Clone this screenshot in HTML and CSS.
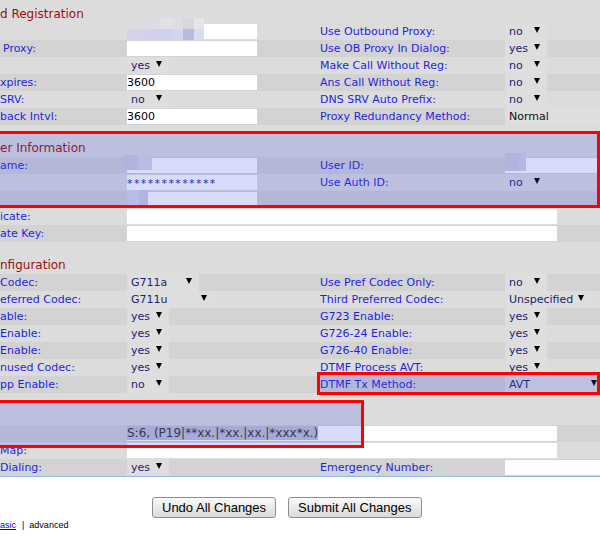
FILE: index.html
```html
<!DOCTYPE html>
<html>
<head>
<meta charset="utf-8">
<title>Line configuration</title>
<link rel="stylesheet" href="styles.css">
</head>
<body>
<div class="page">
  <div class="cfg">
    <div class="top-gap"></div>
    <div class="head">d Registration</div>

    <div class="row lt">
      <div class="lab"></div>
      <div class="val">
        <div class="inp"></div>
        <svg class="mos mos1" width="77" height="22" viewBox="0 0 77 22">
          <rect x="0" y="0" width="23" height="11" fill="#dcdce0"/>
          <rect x="23" y="0" width="11" height="11" fill="#dcdce2"/>
          <rect x="34" y="0" width="11" height="11" fill="#e2e2e6"/>
          <rect x="45" y="0" width="11" height="11" fill="#dedee2"/>
          <rect x="56" y="0" width="11" height="11" fill="#d8d8dc"/>
          <rect x="67" y="0" width="10" height="11" fill="#e6e6e8"/>
          <rect x="0" y="11" width="23" height="11" fill="#d2d2ec"/>
          <rect x="23" y="11" width="11" height="11" fill="#d0d0ea"/>
          <rect x="34" y="11" width="11" height="11" fill="#cdd3ee"/>
          <rect x="45" y="11" width="11" height="11" fill="#d5d5ef"/>
          <rect x="56" y="11" width="11" height="11" fill="#babade"/>
          <rect x="67" y="11" width="10" height="11" fill="#d6dcf4"/>
        </svg>
      </div>
      <div class="lab">Use Outbound Proxy:</div>
      <div class="val"><div class="sel">no<i class="tri"></i></div></div>
    </div>
    <div class="row dk">
      <div class="lab ind">Proxy:</div>
      <div class="val"><div class="inp"></div></div>
      <div class="lab">Use OB Proxy In Dialog:</div>
      <div class="val"><div class="sel">yes<i class="tri"></i></div></div>
    </div>
    <div class="row lt">
      <div class="lab"></div>
      <div class="val"><div class="sel">yes<i class="tri"></i></div></div>
      <div class="lab">Make Call Without Reg:</div>
      <div class="val"><div class="sel">no<i class="tri"></i></div></div>
    </div>
    <div class="row dk">
      <div class="lab">xpires:</div>
      <div class="val"><div class="inp">3600</div></div>
      <div class="lab">Ans Call Without Reg:</div>
      <div class="val"><div class="sel">no<i class="tri"></i></div></div>
    </div>
    <div class="row lt">
      <div class="lab">SRV:</div>
      <div class="val"><div class="sel">no<i class="tri"></i></div></div>
      <div class="lab">DNS SRV Auto Prefix:</div>
      <div class="val"><div class="sel">no<i class="tri"></i></div></div>
    </div>
    <div class="row dk">
      <div class="lab">back Intvl:</div>
      <div class="val"><div class="inp">3600</div></div>
      <div class="lab">Proxy Redundancy Method:</div>
      <div class="val"><div class="sel s-wide">Normal</div></div>
    </div>

    <div class="blank"></div>
    <div class="head">er Information</div>

    <div class="row dk">
      <div class="lab">ame:</div>
      <div class="val">
        <div class="inp"></div>
        <svg class="mos mos2" width="29" height="15" viewBox="0 0 29 15">
          <rect x="0" y="0" width="15" height="15" fill="#cdcdde"/>
          <rect x="15" y="0" width="14" height="15" fill="#d7d7e8"/>
        </svg>
      </div>
      <div class="lab">User ID:</div>
      <div class="val">
        <div class="inp fill"></div>
        <svg class="mos mos3" width="21" height="18" viewBox="0 0 21 18">
          <rect x="0" y="0" width="14" height="18" fill="#cdcdde"/>
          <rect x="14" y="0" width="7" height="18" fill="#d3d3e6"/>
        </svg>
      </div>
    </div>
    <div class="row lt">
      <div class="lab"></div>
      <div class="val"><div class="inp pw">*************</div></div>
      <div class="lab">Use Auth ID:</div>
      <div class="val"><div class="sel">no<i class="tri"></i></div></div>
    </div>
    <div class="row dk">
      <div class="lab"></div>
      <div class="val">
        <div class="inp"></div>
        <svg class="mos mos4" width="21" height="16" viewBox="0 0 21 16">
          <rect x="0" y="0" width="12" height="16" fill="#d7d7e8"/>
          <rect x="12" y="0" width="9" height="16" fill="#cdcdde"/>
        </svg>
      </div>
      <div class="lab"></div>
      <div class="val"></div>
    </div>
    <div class="row lt">
      <div class="lab">icate:</div>
      <div class="val wide"><div class="inp w430"></div></div>
    </div>
    <div class="row dk">
      <div class="lab">ate Key:</div>
      <div class="val wide"><div class="inp w430"></div></div>
    </div>

    <div class="blank"></div>
    <div class="head">nfiguration</div>

    <div class="row dk">
      <div class="lab">Codec:</div>
      <div class="val"><div class="sel s72">G711a<i class="tri"></i></div></div>
      <div class="lab">Use Pref Codec Only:</div>
      <div class="val"><div class="sel">no<i class="tri"></i></div></div>
    </div>
    <div class="row lt">
      <div class="lab">eferred Codec:</div>
      <div class="val"><div class="sel s87">G711u<i class="tri"></i></div></div>
      <div class="lab">Third Preferred Codec:</div>
      <div class="val"><div class="sel s87 r8">Unspecified<i class="tri"></i></div></div>
    </div>
    <div class="row dk">
      <div class="lab">able:</div>
      <div class="val"><div class="sel">yes<i class="tri"></i></div></div>
      <div class="lab">G723 Enable:</div>
      <div class="val"><div class="sel">yes<i class="tri"></i></div></div>
    </div>
    <div class="row lt">
      <div class="lab">Enable:</div>
      <div class="val"><div class="sel">yes<i class="tri"></i></div></div>
      <div class="lab">G726-24 Enable:</div>
      <div class="val"><div class="sel">yes<i class="tri"></i></div></div>
    </div>
    <div class="row dk">
      <div class="lab">Enable:</div>
      <div class="val"><div class="sel">yes<i class="tri"></i></div></div>
      <div class="lab">G726-40 Enable:</div>
      <div class="val"><div class="sel">yes<i class="tri"></i></div></div>
    </div>
    <div class="row lt">
      <div class="lab">nused Codec:</div>
      <div class="val"><div class="sel">yes<i class="tri"></i></div></div>
      <div class="lab">DTMF Process AVT:</div>
      <div class="val"><div class="sel">yes<i class="tri"></i></div></div>
    </div>
    <div class="row dk">
      <div class="lab">pp Enable:</div>
      <div class="val"><div class="sel">no<i class="tri"></i></div></div>
      <div class="lab">DTMF Tx Method:</div>
      <div class="val"><div class="sel s-full">AVT<i class="tri"></i></div></div>
    </div>

    <div class="blank"></div>
    <div class="head"></div>

    <div class="row dk">
      <div class="lab"></div>
      <div class="val wide"><div class="inp w430 plan"><span class="hl">S:6, (P19|**xx.|*xx.|xx.|*xxx*x.)</span></div></div>
    </div>
    <div class="row lt">
      <div class="lab">Map:</div>
      <div class="val wide"><div class="inp w430"></div></div>
    </div>
    <div class="row dk">
      <div class="lab">Dialing:</div>
      <div class="val"><div class="sel">yes<i class="tri"></i></div></div>
      <div class="lab">Emergency Number:</div>
      <div class="val"><div class="inp fill"></div></div>
    </div>
  </div>

  <div class="actions">
    <button class="btn" type="button">Undo All Changes</button>
    <button class="btn" type="button">Submit All Changes</button>
  </div>
  <div class="links"><a href="#">asic</a><span class="sep">|</span><span>advanced</span></div>

  <div class="mark m1"></div>
  <div class="mark m2"></div>
  <div class="mark m3"></div>
</div>
</body>
</html>
```

FILE: styles.css
```css
* { box-sizing: border-box; }
html, body { margin: 0; padding: 0; }
body {
  width: 600px;
  height: 538px;
  overflow: hidden;
  background: #ffffff;
  font-family: "DejaVu Sans", Verdana, sans-serif;
  font-size: 11px;
}
.page { position: relative; width: 600px; height: 538px; overflow: hidden; }

.cfg {
  background: #dcdcdc;
  border-bottom: 1px solid #8fb4ea;
}
.top-gap { height: 6px; }
.blank { height: 15px; }
.head {
  height: 17px;
  line-height: 17px;
  font-size: 12px;
  color: #9a0f0f;
  white-space: nowrap;
}

.row {
  display: grid;
  grid-template-columns: 127px 193px 185px 95px;
  height: 17px;
}
.row.lt { background: #dcdcdc; }
.row.dk { background: #d3d3d3; }

.lab {
  line-height: 17px;
  color: #1f1fe0;
  white-space: nowrap;
  overflow: hidden;
}
.lab.ind { padding-left: 3px; }

.val { position: relative; height: 17px; }
.val.wide { grid-column: 2 / 5; }

.inp {
  width: 130px;
  height: 15px;
  margin-top: 1px;
  background: #ffffff;
  color: #000000;
  line-height: 15px;
  white-space: nowrap;
  overflow: hidden;
}
.inp.fill { width: 95px; }
.inp.w430 { width: 430px; }
.inp.pw {
  color: #1c2c80;
  letter-spacing: 1.4px;
  line-height: 17px;
}
.inp.plan {
  font-size: 12px;
  color: #333333;
}
.hl { background: #c2c2cf; }

.sel {
  display: flex;
  align-items: center;
  justify-content: space-between;
  width: 42px;
  height: 17px;
  padding: 0 7px 0 4px;
  background: #dedede;
  color: #22226e;
  white-space: nowrap;
}
.sel.s72 { width: 72px; }
.sel.s87 { width: 87px; }
.sel.s-full { width: 95px; padding-right: 3px; }
.sel.r8 { padding-right: 8px; }
.sel.s-wide { width: 95px; color: #111111; }
.tri {
  display: block;
  width: 0;
  height: 0;
  border-left: 3px solid transparent;
  border-right: 3px solid transparent;
  border-top: 6px solid #000000;
  margin-bottom: 3px;
}

.mos { position: absolute; z-index: 1; }
.mos1 { left: 0; top: -5px; }
.mos2 { left: -4px; top: -2px; }
.mos3 { left: 0; top: -4px; }
.mos4 { left: 0; top: -1px; }

.actions {
  display: flex;
  gap: 12px;
  padding: 20px 0 0 152px;
}
.btn {
  font-family: "Liberation Sans", Arial, sans-serif;
  font-size: 13px;
  height: 21px;
  padding: 0 9px;
  margin: 0;
  border: 1px solid #8e8e8e;
  border-radius: 3px;
  background: linear-gradient(#fafafa, #dadada);
  color: #000000;
  line-height: 19px;
}
.links {
  font-family: "Liberation Sans", Arial, sans-serif;
  font-size: 9px;
  line-height: 11px;
  padding-top: 2px;
  color: #000000;
}
.links a { color: #0000ee; text-decoration: underline; }
.sep { margin: 0 5px 0 6px; }

.mark {
  position: absolute;
  border: 3px solid #ff0000;
  background: rgba(60, 80, 230, 0.2);
  pointer-events: none;
  z-index: 2;
}
.m1 { top: 131px; left: 0; width: 600px; height: 77px; border-left: 0; }
.m2 { top: 372px; left: 317px; width: 283px; height: 23px; }
.m3 { top: 400px; left: 0; width: 364px; height: 48px; border-left: 0; }
```
